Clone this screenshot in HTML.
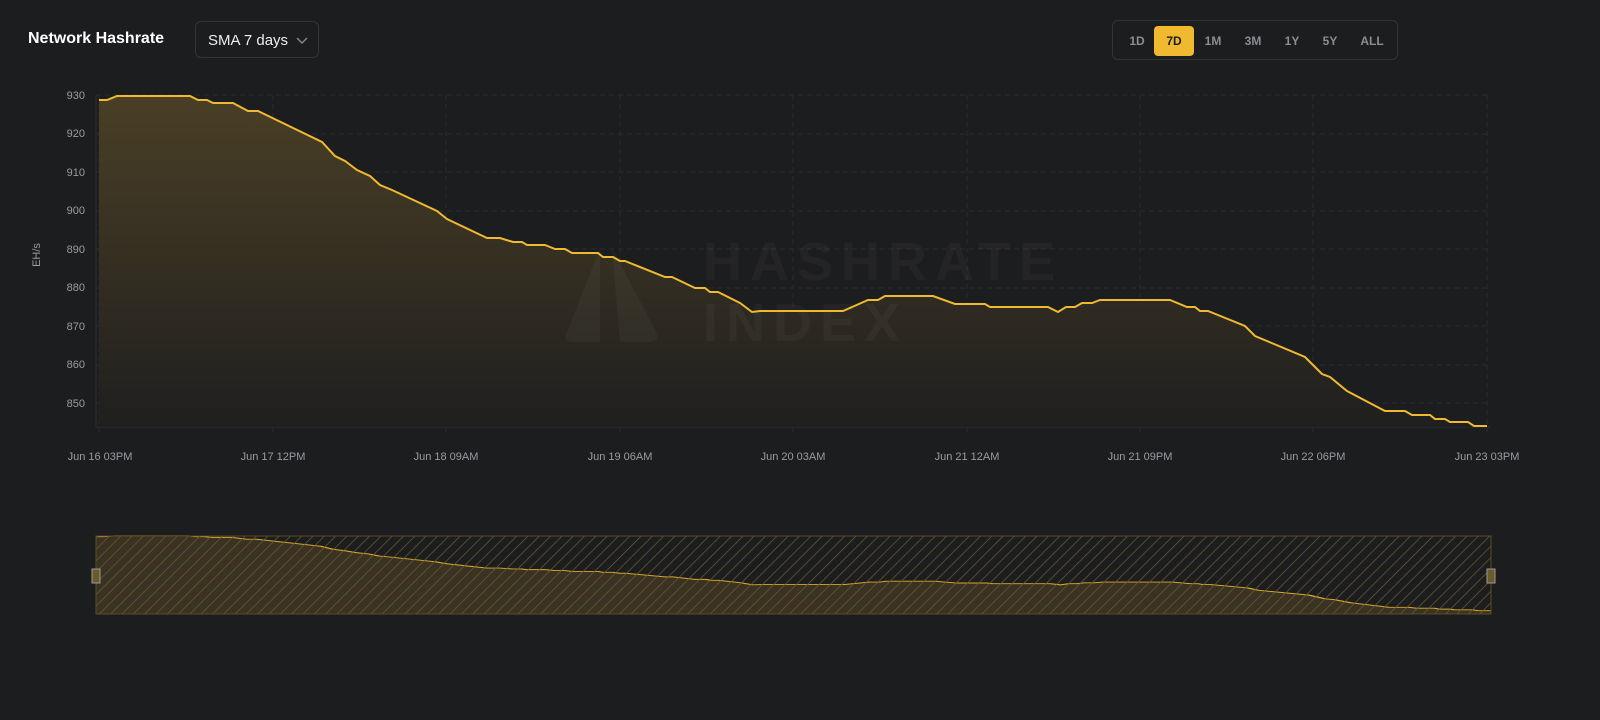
<!DOCTYPE html>
<html><head><meta charset="utf-8"><style>
body{margin:0;background:#1c1d1f;width:1600px;height:720px;overflow:hidden;font-family:"Liberation Sans",sans-serif;position:relative}
.t{position:absolute;left:28px;top:30px;color:#fff;font-weight:bold;font-size:16px}
.sel{position:absolute;left:195px;top:21px;width:124px;height:37px;border:1px solid #333437;border-radius:6px;box-sizing:border-box;color:#eee;font-size:15px;line-height:37px;padding-left:12px}
.rng{position:absolute;left:1112px;top:20px;width:286px;height:40px;border:1px solid #333437;border-radius:6px;box-sizing:border-box}
.rng span{position:absolute;top:5px;height:30px;line-height:30px;font-size:12px;font-weight:bold;color:#8b8d92;text-align:center;width:40px}
.rng .on{background:#f0b930;color:#1c1d1f;border-radius:4px}
</style></head><body>
<div class="t">Network Hashrate</div>
<div class="sel">SMA 7 days<svg style="position:absolute;left:100px;top:15px" width="12" height="8"><path d="M1 1l5 5 5-5" stroke="#888" fill="none" stroke-width="1.4"/></svg></div>
<div class="rng">
<span style="left:4px">1D</span><span class="on" style="left:41px">7D</span><span style="left:80px">1M</span><span style="left:120px">3M</span><span style="left:159px">1Y</span><span style="left:197px">5Y</span><span style="left:239px">ALL</span>
</div>
<svg width="1600" height="720" style="position:absolute;left:0;top:0">
<defs>
<linearGradient id="g" x1="0" y1="0" x2="0" y2="1"><stop offset="0" stop-color="#4a3f25"/><stop offset="1" stop-color="#1f1f1f"/></linearGradient>
<pattern id="h" width="8" height="8" patternUnits="userSpaceOnUse" patternTransform="rotate(45)"><line x1="0" y1="0" x2="0" y2="8" stroke="#6b5a2c" stroke-width="1.5"/></pattern>
</defs>
<g font-size="11" fill="#9a9ca1" text-anchor="end">
<text x="85" y="99">930</text><text x="85" y="137">920</text><text x="85" y="176">910</text><text x="85" y="214">900</text><text x="85" y="253">890</text><text x="85" y="291">880</text><text x="85" y="330">870</text><text x="85" y="368">860</text><text x="85" y="407">850</text>
</g>
<text x="40" y="255" font-size="11" fill="#9a9ca1" transform="rotate(-90 40 255)" text-anchor="middle">EH/s</text>
<g stroke="#2b2c2f" stroke-dasharray="5 4">
<line x1="96" y1="95" x2="1490" y2="95"/><line x1="96" y1="134" x2="1490" y2="134"/><line x1="96" y1="172" x2="1490" y2="172"/><line x1="96" y1="211" x2="1490" y2="211"/><line x1="96" y1="249" x2="1490" y2="249"/><line x1="96" y1="288" x2="1490" y2="288"/><line x1="96" y1="326" x2="1490" y2="326"/><line x1="96" y1="365" x2="1490" y2="365"/><line x1="96" y1="403" x2="1490" y2="403"/>
<line x1="273" y1="95" x2="273" y2="432"/><line x1="446" y1="95" x2="446" y2="432"/><line x1="620" y1="95" x2="620" y2="432"/><line x1="793" y1="95" x2="793" y2="432"/><line x1="967" y1="95" x2="967" y2="432"/><line x1="1140" y1="95" x2="1140" y2="432"/><line x1="1313" y1="95" x2="1313" y2="432"/><line x1="1487" y1="95" x2="1487" y2="432"/><line x1="99" y1="95" x2="99" y2="432"/>
</g>
<line x1="96" y1="427" x2="1490" y2="427" stroke="#2e2f32"/><line x1="96" y1="95" x2="96" y2="427" stroke="#2e2f32"/>
<g font-size="11" fill="#9a9ca1" text-anchor="middle">
<text x="100" y="460">Jun 16 03PM</text><text x="273" y="460">Jun 17 12PM</text><text x="446" y="460">Jun 18 09AM</text><text x="620" y="460">Jun 19 06AM</text><text x="793" y="460">Jun 20 03AM</text><text x="967" y="460">Jun 21 12AM</text><text x="1140" y="460">Jun 21 09PM</text><text x="1313" y="460">Jun 22 06PM</text><text x="1487" y="460">Jun 23 03PM</text>
</g>
<path d="M99 427 L99,100 107,100 117,96 190,96 198,100 207,100 213,103 233,103 248,111 258,111 322,142 335,156 345,161 357,170 370,176 380,185 392,190 437,211 447,219 487,238 500,238 513,242 522,242 527,245 545,245 555,249 565,249 572,253 598,253 603,257 613,257 620,261 625,261 665,277 672,277 695,288 705,288 710,292 718,292 740,303 752,312 760,311 843,311 868,300 878,300 885,296 933,296 955,304 985,304 990,307 1048,307 1058,312 1066,307 1075,307 1082,303 1092,303 1100,300 1170,300 1187,307 1195,307 1200,311 1208,311 1245,326 1255,336 1305,357 1312,364 1322,374 1330,377 1347,391 1385,411 1405,411 1412,415 1430,415 1435,419 1445,419 1450,422 1468,422 1474,426 1487,426 L1487 427Z" fill="url(#g)"/>
<g fill="#ffffff" fill-opacity="0.035" font-weight="bold" font-size="54" letter-spacing="8">
<text x="703" y="280">HASHRATE</text><text x="703" y="341">INDEX</text>
</g>
<path d="M600 248 L568 330 Q560 342 575 342 L600 342 Z M612 248 L655 330 Q662 342 648 342 L620 342 Z" fill="#ffffff" fill-opacity="0.035"/>
<polyline fill="none" stroke="#f0b930" stroke-width="2" points="99,100 107,100 117,96 190,96 198,100 207,100 213,103 233,103 248,111 258,111 322,142 335,156 345,161 357,170 370,176 380,185 392,190 437,211 447,219 487,238 500,238 513,242 522,242 527,245 545,245 555,249 565,249 572,253 598,253 603,257 613,257 620,261 625,261 665,277 672,277 695,288 705,288 710,292 718,292 740,303 752,312 760,311 843,311 868,300 878,300 885,296 933,296 955,304 985,304 990,307 1048,307 1058,312 1066,307 1075,307 1082,303 1092,303 1100,300 1170,300 1187,307 1195,307 1200,311 1208,311 1245,326 1255,336 1305,357 1312,364 1322,374 1330,377 1347,391 1385,411 1405,411 1412,415 1430,415 1435,419 1445,419 1450,422 1468,422 1474,426 1487,426"/>
<g transform="translate(-3,514) scale(1.005,0.227)">
<path d="M99 440 L99,100 107,100 117,96 190,96 198,100 207,100 213,103 233,103 248,111 258,111 322,142 335,156 345,161 357,170 370,176 380,185 392,190 437,211 447,219 487,238 500,238 513,242 522,242 527,245 545,245 555,249 565,249 572,253 598,253 603,257 613,257 620,261 625,261 665,277 672,277 695,288 705,288 710,292 718,292 740,303 752,312 760,311 843,311 868,300 878,300 885,296 933,296 955,304 985,304 990,307 1048,307 1058,312 1066,307 1075,307 1082,303 1092,303 1100,300 1170,300 1187,307 1195,307 1200,311 1208,311 1245,326 1255,336 1305,357 1312,364 1322,374 1330,377 1347,391 1385,411 1405,411 1412,415 1430,415 1435,419 1445,419 1450,422 1468,422 1474,426 1487,426 L1487 440Z" fill="#3a3222"/>
<polyline fill="none" stroke="#d9a82c" stroke-width="4" points="99,100 107,100 117,96 190,96 198,100 207,100 213,103 233,103 248,111 258,111 322,142 335,156 345,161 357,170 370,176 380,185 392,190 437,211 447,219 487,238 500,238 513,242 522,242 527,245 545,245 555,249 565,249 572,253 598,253 603,257 613,257 620,261 625,261 665,277 672,277 695,288 705,288 710,292 718,292 740,303 752,312 760,311 843,311 868,300 878,300 885,296 933,296 955,304 985,304 990,307 1048,307 1058,312 1066,307 1075,307 1082,303 1092,303 1100,300 1170,300 1187,307 1195,307 1200,311 1208,311 1245,326 1255,336 1305,357 1312,364 1322,374 1330,377 1347,391 1385,411 1405,411 1412,415 1430,415 1435,419 1445,419 1450,422 1468,422 1474,426 1487,426"/>
</g>
<rect x="96" y="536" width="1395" height="78" fill="url(#h)" stroke="#5a4c26"/>
<rect x="92" y="569" width="8" height="14" fill="#6b5a2c" stroke="#999"/>
<rect x="1487" y="569" width="8" height="14" fill="#6b5a2c" stroke="#999"/>
</svg>
</body></html>
